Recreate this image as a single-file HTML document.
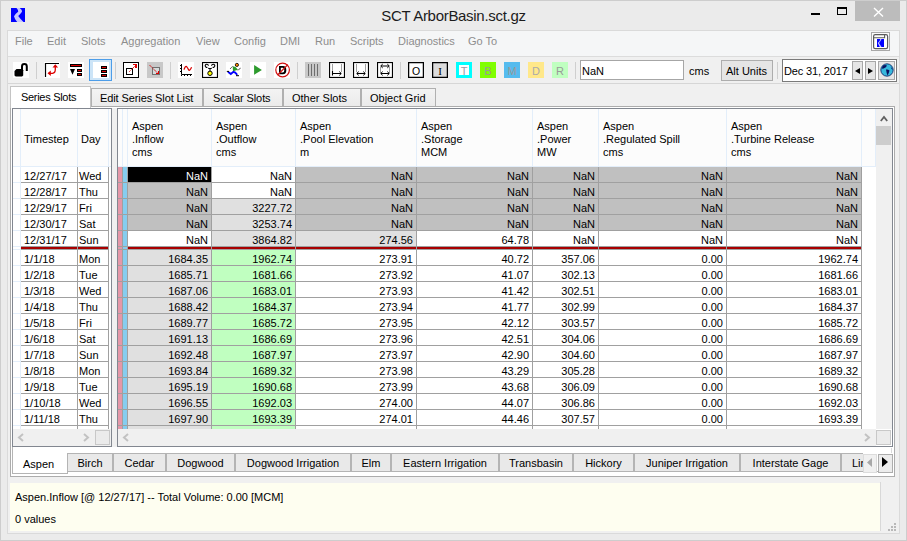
<!DOCTYPE html><html><head><meta charset="utf-8"><style>
html,body{margin:0;padding:0;}
body{width:907px;height:541px;position:relative;overflow:hidden;background:#ebebeb;font-family:"Liberation Sans", sans-serif;}
body div{position:absolute;box-sizing:border-box;}
.t{white-space:nowrap;line-height:13px;}
svg{position:absolute;}

</style></head><body>
<div style="left:0px;top:0px;width:907px;height:541px;border:1px solid #cdcdcd;background:#ebebeb;"></div>
<svg style="left:11px;top:8px" width="14" height="14" viewBox="0 0 14 14"><rect width="14" height="14" fill="#0000ff"/><path d="M5.5 0 L8.8 0 Q11.5 2 11 3.8 Q9.5 6 7.2 8 Q9 10.5 12.5 14 L6.2 14 Q3.5 11 3 8.2 Q4.5 5.5 7.2 3.8 Q7.5 2 5.5 0Z" fill="#c8c8ff"/></svg>
<div class="t" style="left:0;top:7px;width:907px;text-align:center;font-size:15px;letter-spacing:-0.3px;line-height:17px;color:#1c1c1c;">SCT ArborBasin.sct.gz</div>
<div style="left:811px;top:13px;width:9px;height:2px;background:#000;"></div>
<div style="left:837px;top:7px;width:10px;height:8px;border:1px solid #000;border-top-width:2px;"></div>
<div style="left:855px;top:1px;width:45px;height:20px;background:#bcbcbc;"></div>
<svg style="left:873px;top:7px" width="11" height="10" viewBox="0 0 11 10"><path d="M1 1 L10 9.5 M10 1 L1 9.5" stroke="#fff" stroke-width="1.4"/></svg>
<div style="left:7px;top:30px;width:893px;height:504px;background:#f0f0f0;border:1px solid #dadada;"></div>
<div style="left:8px;top:31px;width:891px;height:25px;background:#f5f6f7;"></div>
<div style="left:8px;top:56px;width:891px;height:1px;background:#dcdcdc;"></div>
<div class="t" style="left:15px;top:35px;font-size:11px;color:#8d8d8d;">File</div>
<div class="t" style="left:47px;top:35px;font-size:11px;color:#8d8d8d;">Edit</div>
<div class="t" style="left:81px;top:35px;font-size:11px;color:#8d8d8d;">Slots</div>
<div class="t" style="left:121px;top:35px;font-size:11px;color:#8d8d8d;">Aggregation</div>
<div class="t" style="left:196px;top:35px;font-size:11px;color:#8d8d8d;">View</div>
<div class="t" style="left:234px;top:35px;font-size:11px;color:#8d8d8d;">Config</div>
<div class="t" style="left:280px;top:35px;font-size:11px;color:#8d8d8d;">DMI</div>
<div class="t" style="left:315px;top:35px;font-size:11px;color:#8d8d8d;">Run</div>
<div class="t" style="left:350px;top:35px;font-size:11px;color:#8d8d8d;">Scripts</div>
<div class="t" style="left:398px;top:35px;font-size:11px;color:#8d8d8d;">Diagnostics</div>
<div class="t" style="left:468px;top:35px;font-size:11px;color:#8d8d8d;">Go To</div>
<svg style="left:871px;top:32px" width="19" height="19" viewBox="0 0 19 19"><rect x="0.5" y="0.5" width="18" height="18" fill="#fcfcfc" stroke="#a8a8a8" stroke-width="1"/><rect x="2.6" y="2.6" width="14" height="14" rx="1.6" fill="#fff" stroke="#5c5c5c" stroke-width="1.2"/><path d="M2.6 5.8 H13.6 V2.6" fill="none" stroke="#5c5c5c" stroke-width="1.1"/><rect x="6" y="7" width="7" height="8" fill="#0000ff"/><path d="M9.3 7 L10.5 7 L9.5 9 L8 11 L10.5 15 L8.8 15 L6.8 11 L8.6 9Z" fill="#c8c8ff"/></svg>
<div style="left:8px;top:83px;width:891px;height:1px;background:#d6d6d6;"></div>
<div style="left:36px;top:62px;width:1px;height:17px;background:#cfcfcf;"></div>
<div style="left:115px;top:62px;width:1px;height:17px;background:#cfcfcf;"></div>
<div style="left:170px;top:62px;width:1px;height:17px;background:#cfcfcf;"></div>
<div style="left:297px;top:62px;width:1px;height:17px;background:#cfcfcf;"></div>
<div style="left:400px;top:62px;width:1px;height:17px;background:#cfcfcf;"></div>
<div style="left:575px;top:62px;width:1px;height:17px;background:#cfcfcf;"></div>
<div style="left:777px;top:62px;width:1px;height:17px;background:#cfcfcf;"></div>
<svg style="left:13px;top:62px" width="16" height="16" viewBox="0 0 16 16"><rect width="16" height="16" fill="#fff"/><path d="M9 8 V4.5 A2.4 2.4 0 0 1 13.8 4.5 V9" fill="none" stroke="#000" stroke-width="2"/><path d="M3.5 6.9 H9 L10.2 8.2 V13.4 L9 14.6 H2.7 L1.5 13.4 V8.9Z" fill="#000"/></svg>
<svg style="left:44px;top:62px" width="16" height="16" viewBox="0 0 16 16"><rect width="16" height="16" fill="#fff"/><path d="M1.5 15 V1.5 H15" fill="none" stroke="#000" stroke-width="1.2"/><path d="M5 11.3 H8.5 Q11.3 11 11.3 7.5 V4.5" fill="none" stroke="#d00" stroke-width="1.3"/><path d="M3.5 11.3 L6.8 8.5 L6.8 14.1Z M11.3 2.3 L8.5 5.6 L14.1 5.6Z" fill="#d00"/></svg>
<svg style="left:68px;top:62px" width="16" height="16" viewBox="0 0 16 16"><rect width="16" height="16" fill="#fff"/><g shape-rendering="crispEdges"><rect x="2" y="2" width="12" height="3" fill="#000"/><rect x="3" y="3" width="10" height="1" fill="#e00000"/><rect x="9" y="7" width="5" height="3" fill="#000"/><rect x="10" y="8" width="3" height="1" fill="#e00000"/><rect x="9" y="11" width="5" height="3" fill="#000"/><rect x="10" y="12" width="3" height="1" fill="#e00000"/></g><path d="M2 7 H7 L4.5 12.8Z" fill="#000"/></svg>
<div style="left:89px;top:59px;width:23px;height:22px;border:1px solid #4d9de8;background:#cce4f7;"></div>
<svg style="left:93px;top:62px" width="16" height="16" viewBox="0 0 16 16" shape-rendering="crispEdges"><rect width="16" height="16" fill="#fff"/><rect x="8" y="4" width="6" height="3" fill="#000"/><rect x="9" y="5" width="4" height="1" fill="#e00000"/><rect x="8" y="8" width="6" height="3" fill="#000"/><rect x="9" y="9" width="4" height="1" fill="#e00000"/><rect x="8" y="12" width="6" height="3" fill="#000"/><rect x="9" y="13" width="4" height="1" fill="#e00000"/></svg>
<svg style="left:123px;top:62px" width="16" height="16" viewBox="0 0 16 16"><rect width="16" height="16" fill="#fff"/><g shape-rendering="crispEdges"><rect x="0.5" y="0.5" width="15" height="15" fill="none" stroke="#000" stroke-width="1.2"/><rect x="3.5" y="6.5" width="6" height="6" fill="none" stroke="#000" stroke-width="1.1"/><rect x="10" y="2" width="3.5" height="1.2" fill="#d00"/><rect x="12.3" y="2" width="1.2" height="3.5" fill="#d00"/></g><path d="M6.3 9.7 L12.8 3.2" stroke="#d00" stroke-width="1" stroke-dasharray="1.2 0.6"/></svg>
<svg style="left:147px;top:62px" width="16" height="16" viewBox="0 0 16 16"><rect width="16" height="16" fill="#c8c8c8"/><g shape-rendering="crispEdges"><rect x="5.5" y="5.5" width="7" height="7" fill="#d4dcdc" stroke="#707070" stroke-width="1.2"/><rect x="8.5" y="11" width="3.5" height="1.2" fill="#d00"/><rect x="10.8" y="8.5" width="1.2" height="3.5" fill="#d00"/></g><path d="M2.5 3 L11.5 12" stroke="#d00" stroke-width="1" stroke-dasharray="1.2 0.6"/></svg>
<svg style="left:178px;top:62px" width="16" height="16" viewBox="0 0 16 16"><rect width="16" height="16" fill="#fff"/><path d="M3.5 2 V12.5 H14" fill="none" stroke="#000" stroke-width="1"/><path d="M2 3.5 H3 M2 6.5 H3 M2 9.5 H3 M3.5 13 V14 M6.5 13 V14 M9.5 13 V14 M12.5 13 V14" stroke="#000" stroke-width="1"/><path d="M6 7.6 Q7.3 3.6 8.6 4.6 Q9.6 5.6 10.6 7.8 Q11.4 9 12.6 7 L13.6 5.2" fill="none" stroke="#d80000" stroke-width="1.3"/></svg>
<svg style="left:202px;top:62px" width="16" height="16" viewBox="0 0 16 16"><rect width="16" height="16" fill="#fff"/><rect x="0.5" y="0.5" width="15" height="15" fill="#fff" stroke="#000" stroke-width="1.2"/><path d="M6.4 3.8 A1.6 1.6 0 1 0 5.4 5.3 M9.6 3.8 A1.6 1.6 0 1 1 10.6 5.3" fill="none" stroke="#000" stroke-width="1.1"/><path d="M5.4 5.3 L7 6.5 M10.6 5.3 L9 6.5" stroke="#999" stroke-width="0.9"/><path d="M6.3 6.5 H9.7 M8 6.5 V9" stroke="#000" stroke-width="1"/><circle cx="8" cy="11.3" r="2.2" fill="#ff0" stroke="#000" stroke-width="1"/></svg>
<svg style="left:226px;top:62px" width="16" height="16" viewBox="0 0 16 16"><rect width="16" height="16" fill="#fff"/><circle cx="10.9" cy="2.9" r="1.6" fill="#f80" stroke="#000" stroke-width="0.8"/><path d="M6.7 4.2 L9.5 5 L12 7.8 L9.5 8.5 L7 9.6Z" fill="#2a9a2a"/><path d="M4.3 6.7 L6.7 4.2 M11.8 8.2 L14.7 6.1" stroke="#000" stroke-width="0.9" stroke-dasharray="1 0.5"/><path d="M2 9.8 L4.8 12 L7.4 9.8 L9.2 10.5 L11.2 12.8" fill="none" stroke="#00f" stroke-width="1.9"/><path d="M0.8 9.4 H3 M10 13.7 H13" stroke="#000" stroke-width="1"/></svg>
<svg style="left:250px;top:62px" width="16" height="16" viewBox="0 0 16 16"><rect width="16" height="16" fill="#fff"/><path d="M4.1 3.1 L11.9 8 L4.1 12.8Z" fill="#2e9b2e"/></svg>
<svg style="left:274px;top:62px" width="16" height="16" viewBox="0 0 16 16"><rect width="16" height="16" fill="#fff"/><path d="M5 4 H9 Q12.3 4 12.3 8.2 Q12.3 12.3 9 12.3 H5Z M6.8 5.8 V10.5 H8.8 Q10.3 10.5 10.3 8.2 Q10.3 5.8 8.8 5.8Z" fill="#000" fill-rule="evenodd"/><circle cx="8.6" cy="8" r="6.8" fill="none" stroke="#d01010" stroke-width="1.2"/><path d="M3.6 13 L13.8 2.6" stroke="#d01010" stroke-width="1.3"/></svg>
<svg style="left:305px;top:62px" width="16" height="16" viewBox="0 0 16 16"><rect width="16" height="16" fill="#c8c8c8"/><path d="M3.5 2 V14 M6.5 2 V14 M9.5 2 V14 M12.5 2 V14" stroke="#6e6e6e" stroke-width="1"/></svg>
<svg style="left:329px;top:62px" width="16" height="16" viewBox="0 0 16 16"><rect width="16" height="16" fill="#fff"/><rect x="0.5" y="0.5" width="15" height="15" fill="none" stroke="#000" stroke-width="1.2"/><path d="M3.5 2 V9 M12.5 2 V10" stroke="#a0a0a0" stroke-width="1"/><path d="M3.5 9 V13.5 M3.5 11.5 H12" stroke="#000" stroke-width="1.1"/><path d="M10.3 9.6 L12.3 11.5 L10.3 13.4" fill="none" stroke="#000" stroke-width="1"/></svg>
<svg style="left:353px;top:62px" width="16" height="16" viewBox="0 0 16 16"><rect width="16" height="16" fill="#fff"/><rect x="0.5" y="0.5" width="15" height="15" fill="none" stroke="#000" stroke-width="1.2"/><path d="M3.5 2 V10 M12.5 2 V10" stroke="#a0a0a0" stroke-width="1"/><path d="M4 11.5 H12" stroke="#000" stroke-width="1.1"/><path d="M5.7 9.6 L3.7 11.5 L5.7 13.4 M10.3 9.6 L12.3 11.5 L10.3 13.4" fill="none" stroke="#000" stroke-width="1"/></svg>
<svg style="left:377px;top:62px" width="16" height="16" viewBox="0 0 16 16"><rect width="16" height="16" fill="#fff"/><rect x="0.5" y="0.5" width="15" height="15" fill="none" stroke="#000" stroke-width="1.2"/><path d="M3.5 5 V11 M12.5 5 V11" stroke="#a0a0a0" stroke-width="1"/><path d="M4 4 H12 M4 11.5 H12" stroke="#000" stroke-width="1.1"/><path d="M5.7 2.1 L3.7 4 L5.7 5.9 M10.3 2.1 L12.3 4 L10.3 5.9 M5.7 9.6 L3.7 11.5 L5.7 13.4 M10.3 9.6 L12.3 11.5 L10.3 13.4" fill="none" stroke="#000" stroke-width="1"/></svg>
<svg style="left:408px;top:62px" width="16" height="16" viewBox="0 0 16 16"><rect width="16" height="16" fill="#fff"/><rect x="0.6" y="0.6" width="14.8" height="14.8" fill="#fff" stroke="#000" stroke-width="1.3"/><text x="8" y="12.5" text-anchor="middle" font-family="Liberation Sans" font-size="10.5" fill="#000">O</text></svg>
<svg style="left:432px;top:62px" width="16" height="16" viewBox="0 0 16 16"><rect width="16" height="16" fill="#fff"/><rect x="0.6" y="0.6" width="14.8" height="14.8" fill="#dcdcdc" stroke="#000" stroke-width="1.3"/><text x="8" y="12.5" text-anchor="middle" font-family="Liberation Serif" font-size="11" fill="#000">I</text></svg>
<svg style="left:456px;top:62px" width="16" height="16" viewBox="0 0 16 16"><rect width="16" height="16" fill="#fff"/><rect x="1.5" y="1.5" width="13" height="13" fill="#fff" stroke="#00ffff" stroke-width="3"/><text x="8" y="12.5" text-anchor="middle" font-family="Liberation Sans" font-size="11" fill="#9a9aa8">T</text></svg>
<svg style="left:480px;top:62px" width="16" height="16" viewBox="0 0 16 16"><rect width="16" height="16" fill="#80ff00"/><text x="8" y="12.5" text-anchor="middle" font-family="Liberation Sans" font-size="11" fill="#999">B</text></svg>
<svg style="left:504px;top:62px" width="16" height="16" viewBox="0 0 16 16"><rect width="16" height="16" fill="#55bbee"/><text x="8" y="12.5" text-anchor="middle" font-family="Liberation Sans" font-size="11" fill="#999">M</text></svg>
<svg style="left:528px;top:62px" width="16" height="16" viewBox="0 0 16 16"><rect width="16" height="16" fill="#ffe88a"/><text x="8" y="12.5" text-anchor="middle" font-family="Liberation Sans" font-size="11" fill="#aaa">D</text></svg>
<svg style="left:552px;top:62px" width="16" height="16" viewBox="0 0 16 16"><rect width="16" height="16" fill="#c0ffc0"/><text x="8" y="12.5" text-anchor="middle" font-family="Liberation Sans" font-size="11" fill="#999">R</text></svg>
<div style="left:580px;top:60px;width:104px;height:20px;border:1px solid #a6a6a6;background:#fff;"></div>
<div class="t" style="left:582px;top:65px;font-size:11px;color:#000;">NaN</div>
<div class="t" style="left:689px;top:65px;font-size:11px;color:#000;">cms</div>
<div style="left:721px;top:60px;width:52px;height:21px;border:1px solid #adadad;background:#e5e5e5;"></div>
<div class="t" style="left:726px;top:65px;font-size:11px;color:#000;">Alt Units</div>
<div style="left:782px;top:59px;width:115px;height:23px;border:1px solid #7a7a7a;background:#fff;"></div>
<div class="t" style="left:784px;top:65px;font-size:11px;letter-spacing:-0.15px;">Dec 31, 2017</div>
<div style="left:852px;top:61px;width:11px;height:19px;border:1px solid #a8a8a8;background:#e6e6e6;"></div>
<svg style="left:855px;top:68px" width="5" height="6"><path d="M5 0 L0 3 L5 6Z" fill="#000"/></svg>
<div style="left:865px;top:61px;width:11px;height:19px;border:1px solid #a8a8a8;background:#e6e6e6;"></div>
<svg style="left:868px;top:68px" width="5" height="6"><path d="M0 0 L5 3 L0 6Z" fill="#000"/></svg>
<div style="left:878px;top:61px;width:17px;height:19px;border:1px solid #a8a8a8;background:#e6e6e6;"></div>
<svg style="left:880px;top:63px" width="14" height="14" viewBox="0 0 14 14"><circle cx="7" cy="7" r="6.2" fill="#38b8dc"/><path d="M3 2.5 Q5 1.5 7 2.5 Q6 4.5 4.5 5 Q3 6 2 5.5 Q2 4 3 2.5Z M6 6.5 Q8 6 9.5 7.5 Q9 10 7.5 12.5 Q6.5 10 6 6.5Z M10.5 3.5 Q12.5 5 12.8 7 Q11.5 6.5 10.5 3.5Z" fill="#0a1060"/><circle cx="7" cy="7" r="6.2" fill="none" stroke="#0a1a60" stroke-width="0.8"/></svg>
<div style="left:10px;top:106px;width:885px;height:371px;border:1px solid #acacac;background:#fff;"></div>
<div style="left:91px;top:88px;width:112px;height:18px;background:linear-gradient(#f3f3f3,#ebebeb);border:1px solid #b0b0b0;border-bottom:none;"></div>
<div class="t" style="left:100px;top:92px;font-size:11px;letter-spacing:-0.1px;">Edit Series Slot List</div>
<div style="left:203px;top:88px;width:80px;height:18px;background:linear-gradient(#f3f3f3,#ebebeb);border:1px solid #b0b0b0;border-bottom:none;"></div>
<div class="t" style="left:213px;top:92px;font-size:11px;letter-spacing:-0.1px;">Scalar Slots</div>
<div style="left:283px;top:88px;width:78px;height:18px;background:linear-gradient(#f3f3f3,#ebebeb);border:1px solid #b0b0b0;border-bottom:none;"></div>
<div class="t" style="left:292px;top:92px;font-size:11px;letter-spacing:0px;">Other Slots</div>
<div style="left:361px;top:88px;width:75px;height:18px;background:linear-gradient(#f3f3f3,#ebebeb);border:1px solid #b0b0b0;border-bottom:none;"></div>
<div class="t" style="left:370px;top:92px;font-size:11px;letter-spacing:0px;">Object Grid</div>
<div style="left:10px;top:86px;width:81px;height:22px;background:#fff;border:1px solid #c4c4c4;border-bottom:none;"></div>
<div class="t" style="left:21px;top:91px;font-size:11px;letter-spacing:-0.3px;">Series Slots</div>
<div style="left:12px;top:108px;width:100px;height:339px;border:1px solid #828790;background:#fff;"></div>
<div style="left:13px;top:109px;width:98px;height:58px;background:#fcfcfc;"></div>
<div style="left:20px;top:109px;width:1px;height:58px;background:#e3eefa;"></div>
<div style="left:77px;top:109px;width:1px;height:58px;background:#e3eefa;"></div>
<div style="left:108px;top:109px;width:1px;height:58px;background:#e3eefa;"></div>
<div style="left:13px;top:166px;width:98px;height:1px;background:#e3eefa;"></div>
<div class="t" style="left:24px;top:133px;font-size:11px;color:#000;">Timestep</div>
<div class="t" style="left:81px;top:133px;font-size:11px;color:#000;">Day</div>
<div style="left:77px;top:167px;width:1px;height:262px;background:#a0a0a0;"></div>
<div style="left:108px;top:167px;width:1px;height:262px;background:#a0a0a0;"></div>
<div style="left:20px;top:167px;width:1px;height:262px;background:#e3eefa;"></div>
<div style="left:21px;top:182px;width:88px;height:1px;background:#a0a0a0;"></div>
<div style="left:13px;top:182px;width:7px;height:1px;background:#e3eefa;"></div>
<div style="left:21px;top:198px;width:88px;height:1px;background:#a0a0a0;"></div>
<div style="left:13px;top:198px;width:7px;height:1px;background:#e3eefa;"></div>
<div style="left:21px;top:214px;width:88px;height:1px;background:#a0a0a0;"></div>
<div style="left:13px;top:214px;width:7px;height:1px;background:#e3eefa;"></div>
<div style="left:21px;top:230px;width:88px;height:1px;background:#a0a0a0;"></div>
<div style="left:13px;top:230px;width:7px;height:1px;background:#e3eefa;"></div>
<div style="left:21px;top:246px;width:88px;height:1px;background:#a0a0a0;"></div>
<div style="left:13px;top:246px;width:7px;height:1px;background:#e3eefa;"></div>
<div style="left:21px;top:249px;width:88px;height:1px;background:#a0a0a0;"></div>
<div style="left:13px;top:249px;width:7px;height:1px;background:#e3eefa;"></div>
<div style="left:21px;top:265px;width:88px;height:1px;background:#a0a0a0;"></div>
<div style="left:13px;top:265px;width:7px;height:1px;background:#e3eefa;"></div>
<div style="left:21px;top:281px;width:88px;height:1px;background:#a0a0a0;"></div>
<div style="left:13px;top:281px;width:7px;height:1px;background:#e3eefa;"></div>
<div style="left:21px;top:297px;width:88px;height:1px;background:#a0a0a0;"></div>
<div style="left:13px;top:297px;width:7px;height:1px;background:#e3eefa;"></div>
<div style="left:21px;top:313px;width:88px;height:1px;background:#a0a0a0;"></div>
<div style="left:13px;top:313px;width:7px;height:1px;background:#e3eefa;"></div>
<div style="left:21px;top:329px;width:88px;height:1px;background:#a0a0a0;"></div>
<div style="left:13px;top:329px;width:7px;height:1px;background:#e3eefa;"></div>
<div style="left:21px;top:345px;width:88px;height:1px;background:#a0a0a0;"></div>
<div style="left:13px;top:345px;width:7px;height:1px;background:#e3eefa;"></div>
<div style="left:21px;top:361px;width:88px;height:1px;background:#a0a0a0;"></div>
<div style="left:13px;top:361px;width:7px;height:1px;background:#e3eefa;"></div>
<div style="left:21px;top:377px;width:88px;height:1px;background:#a0a0a0;"></div>
<div style="left:13px;top:377px;width:7px;height:1px;background:#e3eefa;"></div>
<div style="left:21px;top:393px;width:88px;height:1px;background:#a0a0a0;"></div>
<div style="left:13px;top:393px;width:7px;height:1px;background:#e3eefa;"></div>
<div style="left:21px;top:409px;width:88px;height:1px;background:#a0a0a0;"></div>
<div style="left:13px;top:409px;width:7px;height:1px;background:#e3eefa;"></div>
<div style="left:21px;top:425px;width:88px;height:1px;background:#a0a0a0;"></div>
<div style="left:13px;top:425px;width:7px;height:1px;background:#e3eefa;"></div>
<div style="left:21px;top:247px;width:56px;height:2px;background:#a80000;"></div>
<div style="left:78px;top:247px;width:30px;height:2px;background:#a80000;"></div>
<div class="t" style="left:24px;top:170px;font-size:11px;color:#000;">12/27/17</div>
<div class="t" style="left:79px;top:170px;font-size:11px;color:#000;">Wed</div>
<div class="t" style="left:24px;top:186px;font-size:11px;color:#000;">12/28/17</div>
<div class="t" style="left:79px;top:186px;font-size:11px;color:#000;">Thu</div>
<div class="t" style="left:24px;top:202px;font-size:11px;color:#000;">12/29/17</div>
<div class="t" style="left:79px;top:202px;font-size:11px;color:#000;">Fri</div>
<div class="t" style="left:24px;top:218px;font-size:11px;color:#000;">12/30/17</div>
<div class="t" style="left:79px;top:218px;font-size:11px;color:#000;">Sat</div>
<div class="t" style="left:24px;top:234px;font-size:11px;color:#000;">12/31/17</div>
<div class="t" style="left:79px;top:234px;font-size:11px;color:#000;">Sun</div>
<div class="t" style="left:24px;top:253px;font-size:11px;color:#000;">1/1/18</div>
<div class="t" style="left:79px;top:253px;font-size:11px;color:#000;">Mon</div>
<div class="t" style="left:24px;top:269px;font-size:11px;color:#000;">1/2/18</div>
<div class="t" style="left:79px;top:269px;font-size:11px;color:#000;">Tue</div>
<div class="t" style="left:24px;top:285px;font-size:11px;color:#000;">1/3/18</div>
<div class="t" style="left:79px;top:285px;font-size:11px;color:#000;">Wed</div>
<div class="t" style="left:24px;top:301px;font-size:11px;color:#000;">1/4/18</div>
<div class="t" style="left:79px;top:301px;font-size:11px;color:#000;">Thu</div>
<div class="t" style="left:24px;top:317px;font-size:11px;color:#000;">1/5/18</div>
<div class="t" style="left:79px;top:317px;font-size:11px;color:#000;">Fri</div>
<div class="t" style="left:24px;top:333px;font-size:11px;color:#000;">1/6/18</div>
<div class="t" style="left:79px;top:333px;font-size:11px;color:#000;">Sat</div>
<div class="t" style="left:24px;top:349px;font-size:11px;color:#000;">1/7/18</div>
<div class="t" style="left:79px;top:349px;font-size:11px;color:#000;">Sun</div>
<div class="t" style="left:24px;top:365px;font-size:11px;color:#000;">1/8/18</div>
<div class="t" style="left:79px;top:365px;font-size:11px;color:#000;">Mon</div>
<div class="t" style="left:24px;top:381px;font-size:11px;color:#000;">1/9/18</div>
<div class="t" style="left:79px;top:381px;font-size:11px;color:#000;">Tue</div>
<div class="t" style="left:24px;top:397px;font-size:11px;color:#000;">1/10/18</div>
<div class="t" style="left:79px;top:397px;font-size:11px;color:#000;">Wed</div>
<div class="t" style="left:24px;top:413px;font-size:11px;color:#000;">1/11/18</div>
<div class="t" style="left:79px;top:413px;font-size:11px;color:#000;">Thu</div>
<div style="left:109px;top:167px;width:2px;height:262px;background:#fff;"></div>
<div style="left:13px;top:429px;width:98px;height:17px;background:#f0f0f0;"></div>
<svg style="left:17px;top:433px" width="8" height="9"><path d="M6 1 L2 4.5 L6 8" fill="none" stroke="#c2c2c2" stroke-width="2"/></svg>
<svg style="left:82px;top:433px" width="8" height="9"><path d="M2 1 L6 4.5 L2 8" fill="none" stroke="#c2c2c2" stroke-width="2"/></svg>
<div style="left:95px;top:430px;width:15px;height:15px;border:1px solid #c8c8c8;background:#ebebeb;"></div>
<div style="left:112px;top:108px;width:5px;height:339px;background:#f0f0f0;"></div>
<div style="left:117px;top:108px;width:776px;height:339px;border:1px solid #828790;background:#fff;"></div>
<div style="left:118px;top:109px;width:758px;height:58px;background:#fcfcfc;"></div>
<div style="left:122px;top:109px;width:1px;height:58px;background:#e3eefa;"></div>
<div style="left:127px;top:109px;width:1px;height:58px;background:#e3eefa;"></div>
<div style="left:211px;top:109px;width:1px;height:58px;background:#e3eefa;"></div>
<div style="left:295px;top:109px;width:1px;height:58px;background:#e3eefa;"></div>
<div style="left:416px;top:109px;width:1px;height:58px;background:#e3eefa;"></div>
<div style="left:532px;top:109px;width:1px;height:58px;background:#e3eefa;"></div>
<div style="left:598px;top:109px;width:1px;height:58px;background:#e3eefa;"></div>
<div style="left:726px;top:109px;width:1px;height:58px;background:#e3eefa;"></div>
<div style="left:861px;top:109px;width:1px;height:58px;background:#e3eefa;"></div>
<div style="left:875px;top:109px;width:1px;height:58px;background:#e3eefa;"></div>
<div style="left:118px;top:166px;width:758px;height:1px;background:#e3eefa;"></div>
<div class="t" style="left:132px;top:120px;font-size:11px;color:#000;">Aspen</div>
<div class="t" style="left:132px;top:133px;font-size:11px;color:#000;">.Inflow</div>
<div class="t" style="left:132px;top:146px;font-size:11px;color:#000;">cms</div>
<div class="t" style="left:216px;top:120px;font-size:11px;color:#000;">Aspen</div>
<div class="t" style="left:216px;top:133px;font-size:11px;color:#000;">.Outflow</div>
<div class="t" style="left:216px;top:146px;font-size:11px;color:#000;">cms</div>
<div class="t" style="left:300px;top:120px;font-size:11px;color:#000;">Aspen</div>
<div class="t" style="left:300px;top:133px;font-size:11px;color:#000;">.Pool Elevation</div>
<div class="t" style="left:300px;top:146px;font-size:11px;color:#000;">m</div>
<div class="t" style="left:421px;top:120px;font-size:11px;color:#000;">Aspen</div>
<div class="t" style="left:421px;top:133px;font-size:11px;color:#000;">.Storage</div>
<div class="t" style="left:421px;top:146px;font-size:11px;color:#000;">MCM</div>
<div class="t" style="left:537px;top:120px;font-size:11px;color:#000;">Aspen</div>
<div class="t" style="left:537px;top:133px;font-size:11px;color:#000;">.Power</div>
<div class="t" style="left:537px;top:146px;font-size:11px;color:#000;">MW</div>
<div class="t" style="left:603px;top:120px;font-size:11px;color:#000;">Aspen</div>
<div class="t" style="left:603px;top:133px;font-size:11px;color:#000;">.Regulated Spill</div>
<div class="t" style="left:603px;top:146px;font-size:11px;color:#000;">cms</div>
<div class="t" style="left:731px;top:120px;font-size:11px;color:#000;">Aspen</div>
<div class="t" style="left:731px;top:133px;font-size:11px;color:#000;">.Turbine Release</div>
<div class="t" style="left:731px;top:146px;font-size:11px;color:#000;">cms</div>
<div style="left:118px;top:167px;width:4px;height:262px;background:#e597a8;"></div>
<div style="left:122px;top:167px;width:1px;height:262px;background:#a0a0a0;"></div>
<div style="left:123px;top:167px;width:4px;height:262px;background:#86cdef;"></div>
<div style="left:127px;top:167px;width:1px;height:262px;background:#a0a0a0;"></div>
<div style="left:128px;top:167px;width:83px;height:15px;background:#000;"></div>
<div class="t" style="right:699px;top:170px;font-size:11px;color:#fff;text-align:right;">NaN</div>
<div class="t" style="right:615px;top:170px;font-size:11px;color:#000;text-align:right;">NaN</div>
<div style="left:296px;top:167px;width:120px;height:15px;background:#c0c0c0;"></div>
<div class="t" style="right:494px;top:170px;font-size:11px;color:#000;text-align:right;">NaN</div>
<div style="left:417px;top:167px;width:115px;height:15px;background:#c0c0c0;"></div>
<div class="t" style="right:378px;top:170px;font-size:11px;color:#000;text-align:right;">NaN</div>
<div style="left:533px;top:167px;width:65px;height:15px;background:#c0c0c0;"></div>
<div class="t" style="right:312px;top:170px;font-size:11px;color:#000;text-align:right;">NaN</div>
<div style="left:599px;top:167px;width:127px;height:15px;background:#c0c0c0;"></div>
<div class="t" style="right:184px;top:170px;font-size:11px;color:#000;text-align:right;">NaN</div>
<div style="left:727px;top:167px;width:134px;height:15px;background:#c0c0c0;"></div>
<div class="t" style="right:49px;top:170px;font-size:11px;color:#000;text-align:right;">NaN</div>
<div style="left:128px;top:183px;width:83px;height:15px;background:#c0c0c0;"></div>
<div class="t" style="right:699px;top:186px;font-size:11px;color:#000;text-align:right;">NaN</div>
<div class="t" style="right:615px;top:186px;font-size:11px;color:#000;text-align:right;">NaN</div>
<div style="left:296px;top:183px;width:120px;height:15px;background:#c0c0c0;"></div>
<div class="t" style="right:494px;top:186px;font-size:11px;color:#000;text-align:right;">NaN</div>
<div style="left:417px;top:183px;width:115px;height:15px;background:#c0c0c0;"></div>
<div class="t" style="right:378px;top:186px;font-size:11px;color:#000;text-align:right;">NaN</div>
<div style="left:533px;top:183px;width:65px;height:15px;background:#c0c0c0;"></div>
<div class="t" style="right:312px;top:186px;font-size:11px;color:#000;text-align:right;">NaN</div>
<div style="left:599px;top:183px;width:127px;height:15px;background:#c0c0c0;"></div>
<div class="t" style="right:184px;top:186px;font-size:11px;color:#000;text-align:right;">NaN</div>
<div style="left:727px;top:183px;width:134px;height:15px;background:#c0c0c0;"></div>
<div class="t" style="right:49px;top:186px;font-size:11px;color:#000;text-align:right;">NaN</div>
<div style="left:128px;top:199px;width:83px;height:15px;background:#c0c0c0;"></div>
<div class="t" style="right:699px;top:202px;font-size:11px;color:#000;text-align:right;">NaN</div>
<div style="left:212px;top:199px;width:83px;height:15px;background:#e0e0e0;"></div>
<div class="t" style="right:615px;top:202px;font-size:11px;color:#000;text-align:right;">3227.72</div>
<div style="left:296px;top:199px;width:120px;height:15px;background:#c0c0c0;"></div>
<div class="t" style="right:494px;top:202px;font-size:11px;color:#000;text-align:right;">NaN</div>
<div style="left:417px;top:199px;width:115px;height:15px;background:#c0c0c0;"></div>
<div class="t" style="right:378px;top:202px;font-size:11px;color:#000;text-align:right;">NaN</div>
<div style="left:533px;top:199px;width:65px;height:15px;background:#c0c0c0;"></div>
<div class="t" style="right:312px;top:202px;font-size:11px;color:#000;text-align:right;">NaN</div>
<div style="left:599px;top:199px;width:127px;height:15px;background:#c0c0c0;"></div>
<div class="t" style="right:184px;top:202px;font-size:11px;color:#000;text-align:right;">NaN</div>
<div style="left:727px;top:199px;width:134px;height:15px;background:#c0c0c0;"></div>
<div class="t" style="right:49px;top:202px;font-size:11px;color:#000;text-align:right;">NaN</div>
<div style="left:128px;top:215px;width:83px;height:15px;background:#c0c0c0;"></div>
<div class="t" style="right:699px;top:218px;font-size:11px;color:#000;text-align:right;">NaN</div>
<div style="left:212px;top:215px;width:83px;height:15px;background:#e0e0e0;"></div>
<div class="t" style="right:615px;top:218px;font-size:11px;color:#000;text-align:right;">3253.74</div>
<div style="left:296px;top:215px;width:120px;height:15px;background:#c0c0c0;"></div>
<div class="t" style="right:494px;top:218px;font-size:11px;color:#000;text-align:right;">NaN</div>
<div style="left:417px;top:215px;width:115px;height:15px;background:#c0c0c0;"></div>
<div class="t" style="right:378px;top:218px;font-size:11px;color:#000;text-align:right;">NaN</div>
<div style="left:533px;top:215px;width:65px;height:15px;background:#c0c0c0;"></div>
<div class="t" style="right:312px;top:218px;font-size:11px;color:#000;text-align:right;">NaN</div>
<div style="left:599px;top:215px;width:127px;height:15px;background:#c0c0c0;"></div>
<div class="t" style="right:184px;top:218px;font-size:11px;color:#000;text-align:right;">NaN</div>
<div style="left:727px;top:215px;width:134px;height:15px;background:#c0c0c0;"></div>
<div class="t" style="right:49px;top:218px;font-size:11px;color:#000;text-align:right;">NaN</div>
<div class="t" style="right:699px;top:234px;font-size:11px;color:#000;text-align:right;">NaN</div>
<div style="left:212px;top:231px;width:83px;height:15px;background:#e0e0e0;"></div>
<div class="t" style="right:615px;top:234px;font-size:11px;color:#000;text-align:right;">3864.82</div>
<div style="left:296px;top:231px;width:120px;height:15px;background:#e0e0e0;"></div>
<div class="t" style="right:494px;top:234px;font-size:11px;color:#000;text-align:right;">274.56</div>
<div class="t" style="right:378px;top:234px;font-size:11px;color:#000;text-align:right;">64.78</div>
<div class="t" style="right:312px;top:234px;font-size:11px;color:#000;text-align:right;">NaN</div>
<div class="t" style="right:184px;top:234px;font-size:11px;color:#000;text-align:right;">NaN</div>
<div class="t" style="right:49px;top:234px;font-size:11px;color:#000;text-align:right;">NaN</div>
<div style="left:128px;top:250px;width:83px;height:15px;background:#e0e0e0;"></div>
<div class="t" style="right:699px;top:253px;font-size:11px;color:#000;text-align:right;">1684.35</div>
<div style="left:212px;top:250px;width:83px;height:15px;background:#c0ffc0;"></div>
<div class="t" style="right:615px;top:253px;font-size:11px;color:#000;text-align:right;">1962.74</div>
<div class="t" style="right:494px;top:253px;font-size:11px;color:#000;text-align:right;">273.91</div>
<div class="t" style="right:378px;top:253px;font-size:11px;color:#000;text-align:right;">40.72</div>
<div class="t" style="right:312px;top:253px;font-size:11px;color:#000;text-align:right;">357.06</div>
<div class="t" style="right:184px;top:253px;font-size:11px;color:#000;text-align:right;">0.00</div>
<div class="t" style="right:49px;top:253px;font-size:11px;color:#000;text-align:right;">1962.74</div>
<div style="left:128px;top:266px;width:83px;height:15px;background:#e0e0e0;"></div>
<div class="t" style="right:699px;top:269px;font-size:11px;color:#000;text-align:right;">1685.71</div>
<div style="left:212px;top:266px;width:83px;height:15px;background:#c0ffc0;"></div>
<div class="t" style="right:615px;top:269px;font-size:11px;color:#000;text-align:right;">1681.66</div>
<div class="t" style="right:494px;top:269px;font-size:11px;color:#000;text-align:right;">273.92</div>
<div class="t" style="right:378px;top:269px;font-size:11px;color:#000;text-align:right;">41.07</div>
<div class="t" style="right:312px;top:269px;font-size:11px;color:#000;text-align:right;">302.13</div>
<div class="t" style="right:184px;top:269px;font-size:11px;color:#000;text-align:right;">0.00</div>
<div class="t" style="right:49px;top:269px;font-size:11px;color:#000;text-align:right;">1681.66</div>
<div style="left:128px;top:282px;width:83px;height:15px;background:#e0e0e0;"></div>
<div class="t" style="right:699px;top:285px;font-size:11px;color:#000;text-align:right;">1687.06</div>
<div style="left:212px;top:282px;width:83px;height:15px;background:#c0ffc0;"></div>
<div class="t" style="right:615px;top:285px;font-size:11px;color:#000;text-align:right;">1683.01</div>
<div class="t" style="right:494px;top:285px;font-size:11px;color:#000;text-align:right;">273.93</div>
<div class="t" style="right:378px;top:285px;font-size:11px;color:#000;text-align:right;">41.42</div>
<div class="t" style="right:312px;top:285px;font-size:11px;color:#000;text-align:right;">302.51</div>
<div class="t" style="right:184px;top:285px;font-size:11px;color:#000;text-align:right;">0.00</div>
<div class="t" style="right:49px;top:285px;font-size:11px;color:#000;text-align:right;">1683.01</div>
<div style="left:128px;top:298px;width:83px;height:15px;background:#e0e0e0;"></div>
<div class="t" style="right:699px;top:301px;font-size:11px;color:#000;text-align:right;">1688.42</div>
<div style="left:212px;top:298px;width:83px;height:15px;background:#c0ffc0;"></div>
<div class="t" style="right:615px;top:301px;font-size:11px;color:#000;text-align:right;">1684.37</div>
<div class="t" style="right:494px;top:301px;font-size:11px;color:#000;text-align:right;">273.94</div>
<div class="t" style="right:378px;top:301px;font-size:11px;color:#000;text-align:right;">41.77</div>
<div class="t" style="right:312px;top:301px;font-size:11px;color:#000;text-align:right;">302.99</div>
<div class="t" style="right:184px;top:301px;font-size:11px;color:#000;text-align:right;">0.00</div>
<div class="t" style="right:49px;top:301px;font-size:11px;color:#000;text-align:right;">1684.37</div>
<div style="left:128px;top:314px;width:83px;height:15px;background:#e0e0e0;"></div>
<div class="t" style="right:699px;top:317px;font-size:11px;color:#000;text-align:right;">1689.77</div>
<div style="left:212px;top:314px;width:83px;height:15px;background:#c0ffc0;"></div>
<div class="t" style="right:615px;top:317px;font-size:11px;color:#000;text-align:right;">1685.72</div>
<div class="t" style="right:494px;top:317px;font-size:11px;color:#000;text-align:right;">273.95</div>
<div class="t" style="right:378px;top:317px;font-size:11px;color:#000;text-align:right;">42.12</div>
<div class="t" style="right:312px;top:317px;font-size:11px;color:#000;text-align:right;">303.57</div>
<div class="t" style="right:184px;top:317px;font-size:11px;color:#000;text-align:right;">0.00</div>
<div class="t" style="right:49px;top:317px;font-size:11px;color:#000;text-align:right;">1685.72</div>
<div style="left:128px;top:330px;width:83px;height:15px;background:#e0e0e0;"></div>
<div class="t" style="right:699px;top:333px;font-size:11px;color:#000;text-align:right;">1691.13</div>
<div style="left:212px;top:330px;width:83px;height:15px;background:#c0ffc0;"></div>
<div class="t" style="right:615px;top:333px;font-size:11px;color:#000;text-align:right;">1686.69</div>
<div class="t" style="right:494px;top:333px;font-size:11px;color:#000;text-align:right;">273.96</div>
<div class="t" style="right:378px;top:333px;font-size:11px;color:#000;text-align:right;">42.51</div>
<div class="t" style="right:312px;top:333px;font-size:11px;color:#000;text-align:right;">304.06</div>
<div class="t" style="right:184px;top:333px;font-size:11px;color:#000;text-align:right;">0.00</div>
<div class="t" style="right:49px;top:333px;font-size:11px;color:#000;text-align:right;">1686.69</div>
<div style="left:128px;top:346px;width:83px;height:15px;background:#e0e0e0;"></div>
<div class="t" style="right:699px;top:349px;font-size:11px;color:#000;text-align:right;">1692.48</div>
<div style="left:212px;top:346px;width:83px;height:15px;background:#c0ffc0;"></div>
<div class="t" style="right:615px;top:349px;font-size:11px;color:#000;text-align:right;">1687.97</div>
<div class="t" style="right:494px;top:349px;font-size:11px;color:#000;text-align:right;">273.97</div>
<div class="t" style="right:378px;top:349px;font-size:11px;color:#000;text-align:right;">42.90</div>
<div class="t" style="right:312px;top:349px;font-size:11px;color:#000;text-align:right;">304.60</div>
<div class="t" style="right:184px;top:349px;font-size:11px;color:#000;text-align:right;">0.00</div>
<div class="t" style="right:49px;top:349px;font-size:11px;color:#000;text-align:right;">1687.97</div>
<div style="left:128px;top:362px;width:83px;height:15px;background:#e0e0e0;"></div>
<div class="t" style="right:699px;top:365px;font-size:11px;color:#000;text-align:right;">1693.84</div>
<div style="left:212px;top:362px;width:83px;height:15px;background:#c0ffc0;"></div>
<div class="t" style="right:615px;top:365px;font-size:11px;color:#000;text-align:right;">1689.32</div>
<div class="t" style="right:494px;top:365px;font-size:11px;color:#000;text-align:right;">273.98</div>
<div class="t" style="right:378px;top:365px;font-size:11px;color:#000;text-align:right;">43.29</div>
<div class="t" style="right:312px;top:365px;font-size:11px;color:#000;text-align:right;">305.28</div>
<div class="t" style="right:184px;top:365px;font-size:11px;color:#000;text-align:right;">0.00</div>
<div class="t" style="right:49px;top:365px;font-size:11px;color:#000;text-align:right;">1689.32</div>
<div style="left:128px;top:378px;width:83px;height:15px;background:#e0e0e0;"></div>
<div class="t" style="right:699px;top:381px;font-size:11px;color:#000;text-align:right;">1695.19</div>
<div style="left:212px;top:378px;width:83px;height:15px;background:#c0ffc0;"></div>
<div class="t" style="right:615px;top:381px;font-size:11px;color:#000;text-align:right;">1690.68</div>
<div class="t" style="right:494px;top:381px;font-size:11px;color:#000;text-align:right;">273.99</div>
<div class="t" style="right:378px;top:381px;font-size:11px;color:#000;text-align:right;">43.68</div>
<div class="t" style="right:312px;top:381px;font-size:11px;color:#000;text-align:right;">306.09</div>
<div class="t" style="right:184px;top:381px;font-size:11px;color:#000;text-align:right;">0.00</div>
<div class="t" style="right:49px;top:381px;font-size:11px;color:#000;text-align:right;">1690.68</div>
<div style="left:128px;top:394px;width:83px;height:15px;background:#e0e0e0;"></div>
<div class="t" style="right:699px;top:397px;font-size:11px;color:#000;text-align:right;">1696.55</div>
<div style="left:212px;top:394px;width:83px;height:15px;background:#c0ffc0;"></div>
<div class="t" style="right:615px;top:397px;font-size:11px;color:#000;text-align:right;">1692.03</div>
<div class="t" style="right:494px;top:397px;font-size:11px;color:#000;text-align:right;">274.00</div>
<div class="t" style="right:378px;top:397px;font-size:11px;color:#000;text-align:right;">44.07</div>
<div class="t" style="right:312px;top:397px;font-size:11px;color:#000;text-align:right;">306.86</div>
<div class="t" style="right:184px;top:397px;font-size:11px;color:#000;text-align:right;">0.00</div>
<div class="t" style="right:49px;top:397px;font-size:11px;color:#000;text-align:right;">1692.03</div>
<div style="left:128px;top:410px;width:83px;height:15px;background:#e0e0e0;"></div>
<div class="t" style="right:699px;top:413px;font-size:11px;color:#000;text-align:right;">1697.90</div>
<div style="left:212px;top:410px;width:83px;height:15px;background:#c0ffc0;"></div>
<div class="t" style="right:615px;top:413px;font-size:11px;color:#000;text-align:right;">1693.39</div>
<div class="t" style="right:494px;top:413px;font-size:11px;color:#000;text-align:right;">274.01</div>
<div class="t" style="right:378px;top:413px;font-size:11px;color:#000;text-align:right;">44.46</div>
<div class="t" style="right:312px;top:413px;font-size:11px;color:#000;text-align:right;">307.57</div>
<div class="t" style="right:184px;top:413px;font-size:11px;color:#000;text-align:right;">0.00</div>
<div class="t" style="right:49px;top:413px;font-size:11px;color:#000;text-align:right;">1693.39</div>
<div style="left:128px;top:426px;width:83px;height:3px;background:#e0e0e0;"></div>
<div style="left:212px;top:426px;width:83px;height:3px;background:#c0ffc0;"></div>
<div style="left:211px;top:167px;width:1px;height:262px;background:#a0a0a0;"></div>
<div style="left:295px;top:167px;width:1px;height:262px;background:#a0a0a0;"></div>
<div style="left:416px;top:167px;width:1px;height:262px;background:#a0a0a0;"></div>
<div style="left:532px;top:167px;width:1px;height:262px;background:#a0a0a0;"></div>
<div style="left:598px;top:167px;width:1px;height:262px;background:#a0a0a0;"></div>
<div style="left:726px;top:167px;width:1px;height:262px;background:#a0a0a0;"></div>
<div style="left:861px;top:167px;width:1px;height:262px;background:#a0a0a0;"></div>
<div style="left:118px;top:182px;width:744px;height:1px;background:#a0a0a0;"></div>
<div style="left:118px;top:198px;width:744px;height:1px;background:#a0a0a0;"></div>
<div style="left:118px;top:214px;width:744px;height:1px;background:#a0a0a0;"></div>
<div style="left:118px;top:230px;width:744px;height:1px;background:#a0a0a0;"></div>
<div style="left:118px;top:246px;width:744px;height:1px;background:#a0a0a0;"></div>
<div style="left:118px;top:249px;width:744px;height:1px;background:#a0a0a0;"></div>
<div style="left:118px;top:265px;width:744px;height:1px;background:#a0a0a0;"></div>
<div style="left:118px;top:281px;width:744px;height:1px;background:#a0a0a0;"></div>
<div style="left:118px;top:297px;width:744px;height:1px;background:#a0a0a0;"></div>
<div style="left:118px;top:313px;width:744px;height:1px;background:#a0a0a0;"></div>
<div style="left:118px;top:329px;width:744px;height:1px;background:#a0a0a0;"></div>
<div style="left:118px;top:345px;width:744px;height:1px;background:#a0a0a0;"></div>
<div style="left:118px;top:361px;width:744px;height:1px;background:#a0a0a0;"></div>
<div style="left:118px;top:377px;width:744px;height:1px;background:#a0a0a0;"></div>
<div style="left:118px;top:393px;width:744px;height:1px;background:#a0a0a0;"></div>
<div style="left:118px;top:409px;width:744px;height:1px;background:#a0a0a0;"></div>
<div style="left:118px;top:425px;width:744px;height:1px;background:#a0a0a0;"></div>
<div style="left:128px;top:247px;width:83px;height:2px;background:#a80000;"></div>
<div style="left:212px;top:247px;width:83px;height:2px;background:#a80000;"></div>
<div style="left:296px;top:247px;width:120px;height:2px;background:#a80000;"></div>
<div style="left:417px;top:247px;width:115px;height:2px;background:#a80000;"></div>
<div style="left:533px;top:247px;width:65px;height:2px;background:#a80000;"></div>
<div style="left:599px;top:247px;width:127px;height:2px;background:#a80000;"></div>
<div style="left:727px;top:247px;width:134px;height:2px;background:#a80000;"></div>
<div style="left:876px;top:109px;width:16px;height:320px;background:#f0f0f0;"></div>
<svg style="left:880px;top:115px" width="8" height="7"><path d="M0.8 6 L4 2 L7.2 6" fill="none" stroke="#606060" stroke-width="1.8"/></svg>
<div style="left:876px;top:126px;width:15px;height:19px;background:#cdcdcd;"></div>
<div style="left:118px;top:429px;width:758px;height:17px;background:#f0f0f0;"></div>
<svg style="left:122px;top:433px" width="8" height="9"><path d="M6 1 L2 4.5 L6 8" fill="none" stroke="#c2c2c2" stroke-width="2"/></svg>
<svg style="left:863px;top:433px" width="8" height="9"><path d="M2 1 L6 4.5 L2 8" fill="none" stroke="#c2c2c2" stroke-width="2"/></svg>
<div style="left:876px;top:430px;width:15px;height:15px;border:1px solid #c8c8c8;background:#ebebeb;"></div>
<div style="left:891px;top:448px;width:1px;height:5px;background:#d9d9d9;"></div>
<div style="left:12px;top:471px;width:880px;height:1px;background:#b4b4b4;"></div>
<div style="left:67px;top:453px;width:46px;height:19px;background:#e9e9e9;border:1px solid #b4b4b4;"></div>
<div class="t" style="left:67px;width:46px;top:457px;font-size:11px;text-align:center;">Birch</div>
<div style="left:113px;top:453px;width:53px;height:19px;background:#e9e9e9;border:1px solid #b4b4b4;"></div>
<div class="t" style="left:113px;width:53px;top:457px;font-size:11px;text-align:center;">Cedar</div>
<div style="left:166px;top:453px;width:69px;height:19px;background:#e9e9e9;border:1px solid #b4b4b4;"></div>
<div class="t" style="left:166px;width:69px;top:457px;font-size:11px;text-align:center;">Dogwood</div>
<div style="left:235px;top:453px;width:116px;height:19px;background:#e9e9e9;border:1px solid #b4b4b4;"></div>
<div class="t" style="left:235px;width:116px;top:457px;font-size:11px;text-align:center;">Dogwood Irrigation</div>
<div style="left:351px;top:453px;width:40px;height:19px;background:#e9e9e9;border:1px solid #b4b4b4;"></div>
<div class="t" style="left:351px;width:40px;top:457px;font-size:11px;text-align:center;">Elm</div>
<div style="left:391px;top:453px;width:108px;height:19px;background:#e9e9e9;border:1px solid #b4b4b4;"></div>
<div class="t" style="left:391px;width:108px;top:457px;font-size:11px;text-align:center;">Eastern Irrigation</div>
<div style="left:499px;top:453px;width:74px;height:19px;background:#e9e9e9;border:1px solid #b4b4b4;"></div>
<div class="t" style="left:499px;width:74px;top:457px;font-size:11px;text-align:center;">Transbasin</div>
<div style="left:573px;top:453px;width:61px;height:19px;background:#e9e9e9;border:1px solid #b4b4b4;"></div>
<div class="t" style="left:573px;width:61px;top:457px;font-size:11px;text-align:center;">Hickory</div>
<div style="left:634px;top:453px;width:106px;height:19px;background:#e9e9e9;border:1px solid #b4b4b4;"></div>
<div class="t" style="left:634px;width:106px;top:457px;font-size:11px;text-align:center;">Juniper Irrigation</div>
<div style="left:740px;top:453px;width:101px;height:19px;background:#e9e9e9;border:1px solid #b4b4b4;"></div>
<div class="t" style="left:740px;width:101px;top:457px;font-size:11px;text-align:center;">Interstate Gage</div>
<div style="left:841px;top:453px;width:22px;height:19px;background:#e9e9e9;border:1px solid #b4b4b4;border-right:none;"></div>
<div class="t" style="left:852px;top:457px;font-size:11px;color:#000;">Lin</div>
<div style="left:12px;top:447px;width:56px;height:27px;background:#fff;border:1px solid #b4b4b4;border-top:none;border-right:none;"></div>
<div style="left:67px;top:453px;width:1px;height:21px;background:#b4b4b4;"></div>
<div class="t" style="left:23px;top:458px;font-size:11px;color:#000;">Aspen</div>
<div style="left:863px;top:454px;width:14px;height:19px;background:#f0f0f0;border:1px solid #dcdcdc;"></div>
<svg style="left:867px;top:458px" width="5" height="9"><path d="M5 0 L0 4.5 L5 9Z" fill="#a8a8a8"/></svg>
<div style="left:878px;top:454px;width:15px;height:19px;background:#ececec;border:1px solid #adadad;"></div>
<svg style="left:882px;top:457px" width="6" height="10"><path d="M0 0 L6 5 L0 10Z" fill="#000"/></svg>
<div style="left:10px;top:483px;width:870px;height:48px;background:#fefef0;"></div>
<div style="left:880px;top:482px;width:1px;height:49px;background:#d8d8d8;"></div>
<div class="t" style="left:15px;top:491px;font-size:11px;color:#000;">Aspen.Inflow [@ 12/27/17] -- Total Volume: 0.00 [MCM]</div>
<div class="t" style="left:15px;top:513px;font-size:11px;color:#000;">0 values</div>
<svg style="left:888px;top:523px" width="8" height="8"><rect x="6" y="0" width="2" height="2" fill="#b8b8b8"/><rect x="6" y="3" width="2" height="2" fill="#b8b8b8"/><rect x="3" y="3" width="2" height="2" fill="#b8b8b8"/><rect x="6" y="6" width="2" height="2" fill="#b8b8b8"/><rect x="3" y="6" width="2" height="2" fill="#b8b8b8"/><rect x="0" y="6" width="2" height="2" fill="#b8b8b8"/></svg>
</body></html>
